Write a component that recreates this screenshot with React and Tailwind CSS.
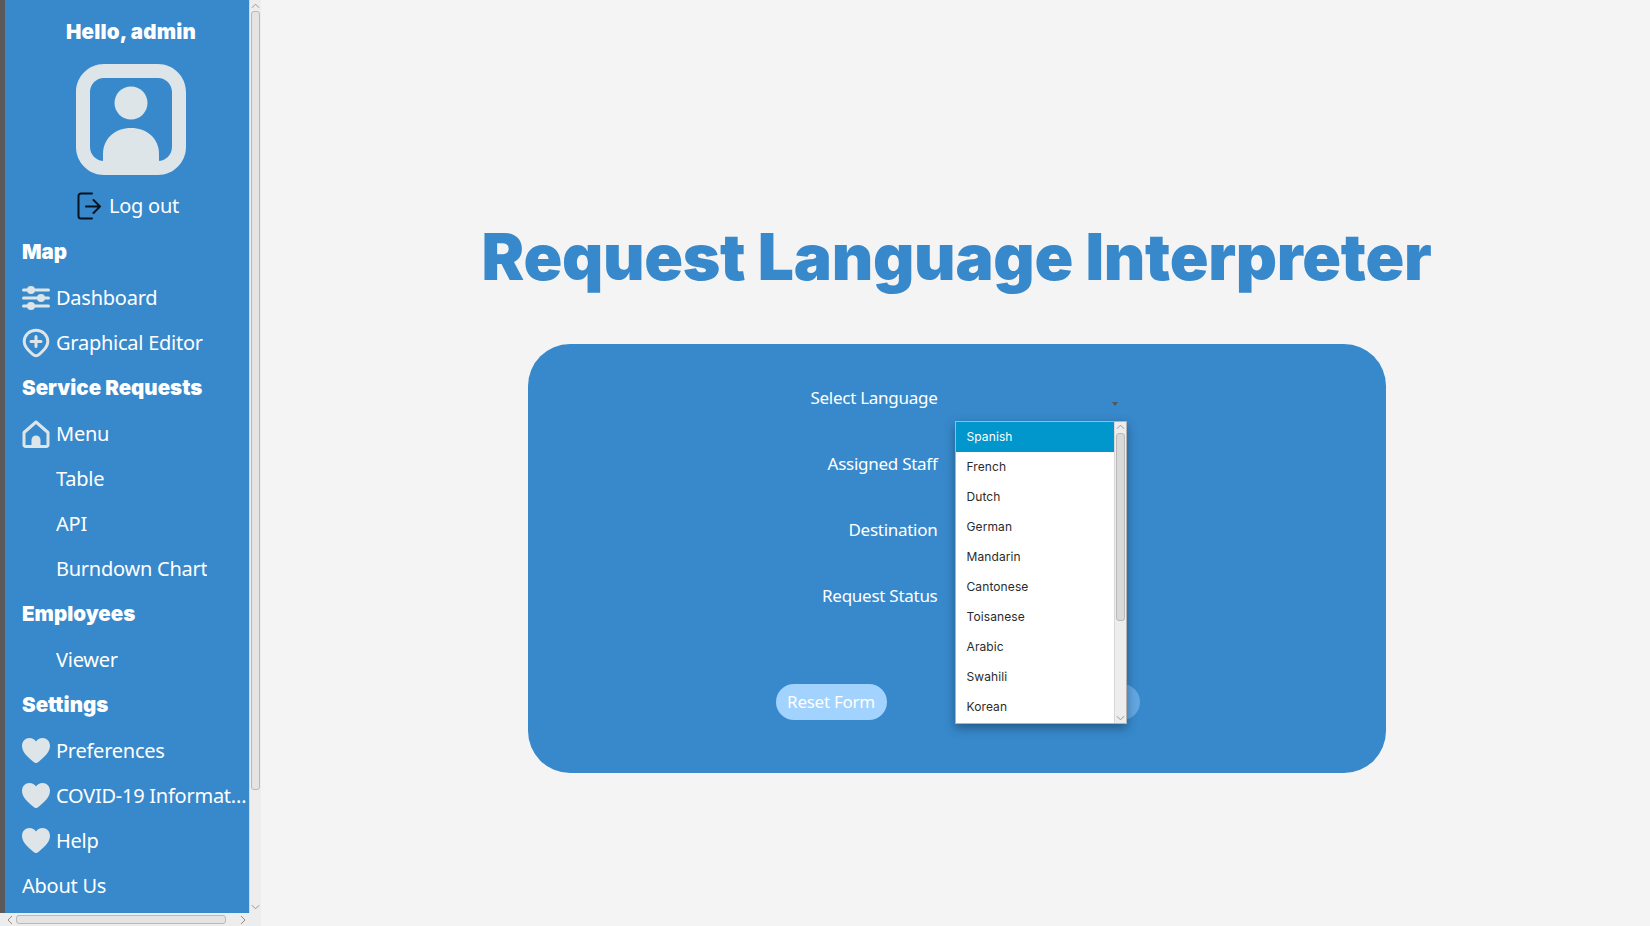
const POP = "font-['Inter','Liberation_Sans',sans-serif]";
const OXY = "font-['Noto_Sans','Open_Sans',sans-serif]";

const SlidersIcon = () => (
  <svg viewBox="0 0 28 26" className="w-[28px] h-[26px]" fill="#dde5e8">
    <rect x="0" y="3.500" width="28" height="3" rx="1.500" />
    <rect x="0" y="11.500" width="28" height="3" rx="1.500" />
    <rect x="0" y="19.500" width="28" height="3" rx="1.500" />
    <circle cx="9" cy="5" r="4" />
    <circle cx="19" cy="13" r="4" />
    <circle cx="9" cy="21" r="4" />
  </svg>
);

const PinPlusIcon = () => (
  <svg viewBox="0 0 28 30" className="w-[28px] h-[30px]" fill="none">
    <path d="M14 2.200C7.500 2.200 2.200 7.300 2.200 13.600c0 5.400 4 9 8 12.200 1.400 1.200 2.600 2 3.800 2s2.400-.8 3.800-2c4-3.200 8-6.800 8-12.200C25.800 7.300 20.500 2.200 14 2.200z" stroke="#dde5e8" strokeWidth="3" />
    <path d="M14 8.500v10M9 13.500h10" stroke="#dde5e8" strokeWidth="3" strokeLinecap="round" />
  </svg>
);

const HomeIcon = () => (
  <svg viewBox="0 0 28 28" className="w-[28px] h-[28px]" fill="none">
    <path d="M2 12.500 14 2l12 10.500V25a1.500 1.500 0 0 1-1.500 1.500h-21A1.500 1.500 0 0 1 2 25z" stroke="#dde5e8" strokeWidth="3" strokeLinejoin="round" />
    <path d="M9.500 26v-6a4.500 4.500 0 0 1 9 0v6z" fill="#dde5e8" />
  </svg>
);

const HeartIcon = () => (
  <svg viewBox="0 0 28 25" className="w-[28px] h-[25px]" fill="#dde5e8">
    <path d="M14 25c-1 0-2-.7-3.300-1.800C5.500 18.700 0 14.200 0 7.800 0 3.300 3.300 0 7.500 0 10.300 0 12.600 1.300 14 3.500 15.400 1.300 17.700 0 20.500 0 24.700 0 28 3.300 28 7.800c0 6.400-5.500 10.900-10.700 15.400C16 24.300 15 25 14 25z" />
  </svg>
);

const LogoutIcon = () => (
  <svg viewBox="0 0 24 28" className="w-[24px] h-[28px]" fill="none" stroke="#06131f" strokeWidth="2" strokeLinecap="round" strokeLinejoin="round">
    <path d="M15 1.500H4a2.500 2.500 0 0 0-2.500 2.500v20A2.500 2.500 0 0 0 4 26.500h11" />
    <path d="M9 14.500h14M16.500 8l6.500 6.500-6.500 6.500" />
  </svg>
);

const Avatar = () => (
  <svg viewBox="0 0 110 111" className="w-[110px] h-[111px]" fill="#dde5e8">
    <path
      fillRule="evenodd"
      d="M28 0h54c15.500 0 28 12.500 28 28v55c0 15.500-12.500 28-28 28H28C12.500 111 0 98.500 0 83V28C0 12.500 12.500 0 28 0zm0 14c-7.700 0-14 6.300-14 14v55c0 7.700 6.300 14 14 14h54c7.700 0 14-6.300 14-14V28c0-7.700-6.300-14-14-14z"
    />
    <circle cx="55" cy="39" r="16.500" />
    <path d="M27 97V90c0-16 12.500-26 28-26s28 10 28 26v7z" />
  </svg>
);

const nav = [
  { type: "head", label: "Map" },
  { label: "Dashboard", icon: <SlidersIcon /> },
  { label: "Graphical Editor", icon: <PinPlusIcon /> },
  { type: "head", label: "Service Requests" },
  { label: "Menu", icon: <HomeIcon /> },
  { label: "Table", indent: true },
  { label: "API", indent: true },
  { label: "Burndown Chart", indent: true },
  { type: "head", label: "Employees" },
  { label: "Viewer", indent: true },
  { type: "head", label: "Settings" },
  { label: "Preferences", icon: <HeartIcon /> },
  { label: "COVID-19 Information", icon: <HeartIcon /> },
  { label: "Help", icon: <HeartIcon /> },
  { label: "About Us" },
];

const languages = ["Spanish", "French", "Dutch", "German", "Mandarin", "Cantonese", "Toisanese", "Arabic", "Swahili", "Korean"];
const fields = ["Select Language", "Assigned Staff", "Destination", "Request Status"];

const Chevron = ({ d, box = "0 0 10 6", className }) => (
  <svg viewBox={box} className={className} fill="none" stroke="#8d8d8d" strokeWidth="1">
    <path d={d} />
  </svg>
);

const Sidebar = () => (
  <div className="flex flex-col w-[261px] h-[926px] shrink-0 bg-[#ededed]">
    <div className="flex flex-1 min-h-0">
      <div className="w-[5px] bg-[#5a5a5a]" />
      <div className="w-[244px] bg-[#3789cc] flex flex-col text-white overflow-hidden">
        <div className={`${POP} text-center font-black text-[20.500px] leading-[26px] mt-[19px] pl-[8px] tracking-[0.2px]`}>Hello, admin</div>
        <div className="flex justify-center mt-[19px] pl-[8px]"><Avatar /></div>
        <div className={`${OXY} flex items-center justify-center gap-[8px] h-[32px] mt-[15px] pl-[2px] text-[20px] tracking-[-0.25px]`}>
          <LogoutIcon />
          <span>Log out</span>
        </div>
        <div className="flex flex-col mt-[7px] pl-[17px]">
          {nav.map((item) =>
            item.type === "head" ? (
              <div key={item.label} className={`${POP} h-[46px] pt-[1px] flex items-center font-black text-[20.500px]`}>{item.label}</div>
            ) : (
              <div key={item.label} className={`${OXY} h-[45px] flex items-center text-[20px] tracking-[-0.25px] gap-[6px] ${item.indent ? "pl-[34px]" : ""}`}>
                {item.icon && <span className="w-[28px] flex justify-center shrink-0">{item.icon}</span>}
                <span className="truncate">{item.label}</span>
              </div>
            )
          )}
        </div>
      </div>
      <div className="w-[12px] flex flex-col items-center bg-[#ededed] border-l border-[#d8d8d8]">
        <Chevron d="M1 5l4-4 4 4" className="w-[9px] h-[6px] mt-[3px]" />
        <div className="w-[9px] h-[779px] mt-[2px] rounded-[3px] bg-[#e4e4e4] border border-[#b9b9b9]" />
        <div className="flex-1" />
        <Chevron d="M1 1l4 4 4-4" className="w-[9px] h-[6px] mb-[3px]" />
      </div>
    </div>
    <div className="h-[13px] flex items-center bg-[#ededed] pl-[7px]">
      <Chevron box="0 0 6 10" d="M5 1 1 5l4 4" className="w-[6px] h-[10px]" />
      <div className="w-[210px] h-[9px] ml-[3px] rounded-[3px] bg-[#e4e4e4] border border-[#b9b9b9]" />
      <Chevron box="0 0 6 10" d="M1 1l4 4-4 4" className="w-[6px] h-[10px] ml-[14px]" />
    </div>
  </div>
);

const LanguageList = () => (
  <div className={`${POP} absolute left-[427px] top-[77px] w-[172px] h-[303px] flex bg-white border border-[#b3b3b3] shadow-[0_4px_10px_rgba(0,0,0,0.35)] text-[12px] tracking-[0.1px] text-[#2b2b2b]`}>
    <div className="flex-1 flex flex-col">
      {languages.map((lang, i) => (
        <div key={lang} className={`h-[30px] shrink-0 flex items-center pl-[11px] ${i === 0 ? "bg-[#0196cc] text-white" : ""}`}>{lang}</div>
      ))}
    </div>
    <div className="w-[12px] flex flex-col items-center bg-[#ededed] border-l border-[#d8d8d8]">
      <Chevron d="M1 5l4-4 4 4" className="w-[9px] h-[6px] mt-[2px]" />
      <div className="w-[9px] h-[188px] mt-[3px] rounded-[3px] bg-[#d9d9d9] border border-[#b9b9b9]" />
      <div className="flex-1" />
      <Chevron d="M1 1l4 4 4-4" className="w-[9px] h-[6px] mb-[2px]" />
    </div>
  </div>
);

const App = () => (
  <div className="flex w-[1650px] h-[926px] overflow-hidden bg-[#f4f4f4]">
    <Sidebar />
    <main className="flex-1 flex flex-col items-center pt-[214px] pl-[2px]">
      <h1 className={`${POP} text-[64px] leading-[86px] font-black text-[#3789cc] tracking-[-0.28px] whitespace-nowrap`}>Request Language Interpreter</h1>
      <div className={`${OXY} relative w-[858px] h-[429px] mt-[44px] rounded-[42px] bg-[#3789cc] text-white text-[17px] tracking-[-0.27px]`}>
        <div className="flex flex-col pt-[21px]">
          {fields.map((f) => (
            <div key={f} className="h-[66px] flex items-center justify-end w-[410px]">{f}</div>
          ))}
        </div>
        <div className="absolute left-[584px] top-[58px] w-0 h-0 border-x-[3px] border-x-transparent border-t-[4px] border-t-[#555]" />
        <div className="flex pt-[55px] pl-[248px] gap-[142px]">
          <button className="w-[111px] h-[36px] rounded-full bg-[#a2d2fe] text-white">Reset Form</button>
          <button className="w-[111px] h-[36px] rounded-full bg-[#62a7e3] text-white">Submit</button>
        </div>
        <LanguageList />
      </div>
    </main>
  </div>
);

export default App;
